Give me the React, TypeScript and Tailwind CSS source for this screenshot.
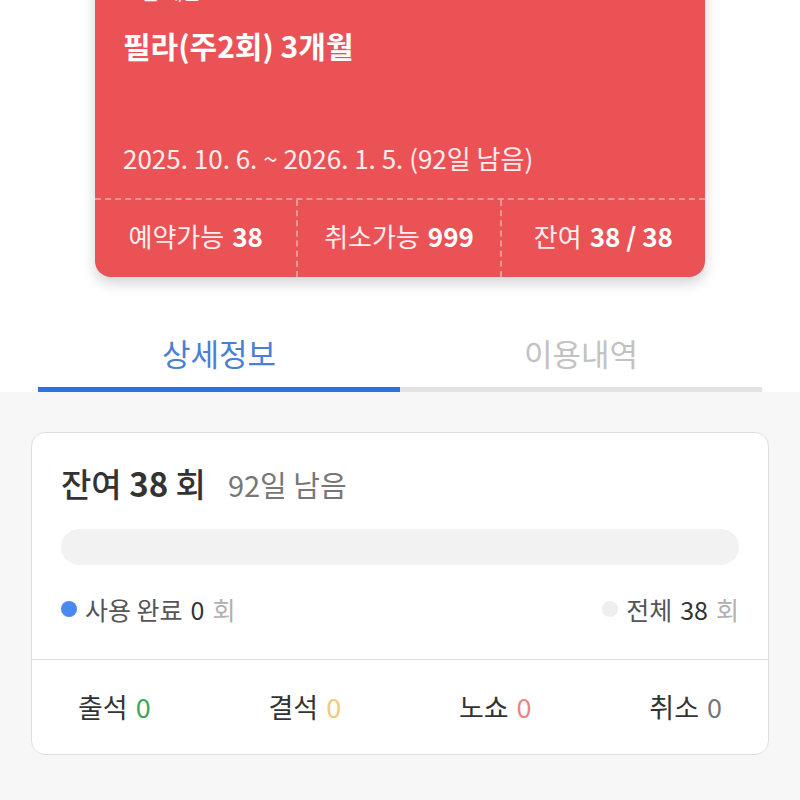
export default function App() {
  const font = { fontFamily: '"Noto Sans CJK KR", "Noto Sans", sans-serif' };
  return (
    <div style={font} className="w-[800px] h-[800px] overflow-hidden bg-white">
      {/* pass card */}
      <div className="bg-white pb-[56px]">
        <div className="mx-[95px] -mt-[40px] rounded-[16px] bg-[#eb5256] text-white shadow-[0_6px_14px_rgba(0,0,0,0.18)]">
          <div className="px-[28px] pt-[20px]">
            <div className="text-[20px] leading-[24px] text-white/90">그룹 레슨</div>
            <div className="mt-[23px] text-[30px] font-bold leading-[36px]">필라(주2회) 3개월</div>
            <div className="mt-[79px] text-[26px] leading-[32px] text-white/90">
              2025. 10. 6. ~ 2026. 1. 5. (92일 남음)
            </div>
          </div>
          <div className="mt-[24px] grid grid-cols-3 border-t-2 border-dashed border-white/40 text-[26px]">
            <div className="flex h-[77px] items-center justify-center gap-[8px] border-r-2 border-dashed border-white/40 pb-[6px]">
              <span className="text-white/90">예약가능</span>
              <span className="font-bold">38</span>
            </div>
            <div className="flex h-[77px] items-center justify-center gap-[8px] border-r-2 border-dashed border-white/40 pb-[6px]">
              <span className="text-white/90">취소가능</span>
              <span className="font-bold">999</span>
            </div>
            <div className="flex h-[77px] items-center justify-center gap-[8px] pb-[6px]">
              <span className="text-white/90">잔여</span>
              <span className="font-bold">38 / 38</span>
            </div>
          </div>
        </div>
      </div>

      {/* tabs */}
      <div className="bg-white px-[38px]">
        <div className="grid grid-cols-2 text-[31px]">
          <div className="flex flex-col items-center">
            <div className="pb-[14px] leading-[40px] text-[#4a7fd4]">상세정보</div>
            <div className="h-[5px] w-full bg-[#2c72e0]" />
          </div>
          <div className="flex flex-col items-center">
            <div className="pb-[14px] leading-[40px] text-[#c2c2c2]">이용내역</div>
            <div className="h-[5px] w-full bg-[#e2e2e2]" />
          </div>
        </div>
      </div>

      {/* detail */}
      <div className="h-full bg-[#f7f7f7] px-[31px] pt-[40px]">
        <div className="rounded-[14px] border border-[#dedede] bg-white">
          <div className="px-[29px] pt-[30px] pb-[34px]">
            <div className="flex items-baseline gap-[22px]">
              <div className="text-[33px] leading-[40px] font-medium text-[#333]">
                잔여 <span className="font-bold">38</span> 회
              </div>
              <div className="text-[29px] leading-[40px] text-[#777]">92일 남음</div>
            </div>
            <div className="mt-[25px] h-[36px] rounded-full bg-[#f2f2f2]" />
            <div className="mt-[28px] flex items-center justify-between text-[25px] leading-[32px]">
              <div className="flex items-center gap-[8px]">
                <span className="h-[16px] w-[16px] rounded-full bg-[#4a88f2]" />
                <span className="text-[#555]">사용 완료</span>
                <span className="text-[#333]">0</span>
                <span className="text-[#b0b0b0]">회</span>
              </div>
              <div className="flex items-center gap-[8px]">
                <span className="h-[16px] w-[16px] rounded-full bg-[#eeeeee]" />
                <span className="text-[#555]">전체</span>
                <span className="text-[#333]">38</span>
                <span className="text-[#b0b0b0]">회</span>
              </div>
            </div>
          </div>
          <div className="flex justify-between border-t border-[#dedede] px-[46px] pt-[29px] pb-[29px] text-[27px] leading-[36px]">
            <div className="flex items-center gap-[8px]">
              <span className="text-[#333]">출석</span>
              <span className="text-[#3aa85a]">0</span>
            </div>
            <div className="flex items-center gap-[8px]">
              <span className="text-[#333]">결석</span>
              <span className="text-[#f0c97a]">0</span>
            </div>
            <div className="flex items-center gap-[8px]">
              <span className="text-[#333]">노쇼</span>
              <span className="text-[#e88585]">0</span>
            </div>
            <div className="flex items-center gap-[8px]">
              <span className="text-[#333]">취소</span>
              <span className="text-[#777]">0</span>
            </div>
          </div>
        </div>
      </div>
    </div>
  );
}
